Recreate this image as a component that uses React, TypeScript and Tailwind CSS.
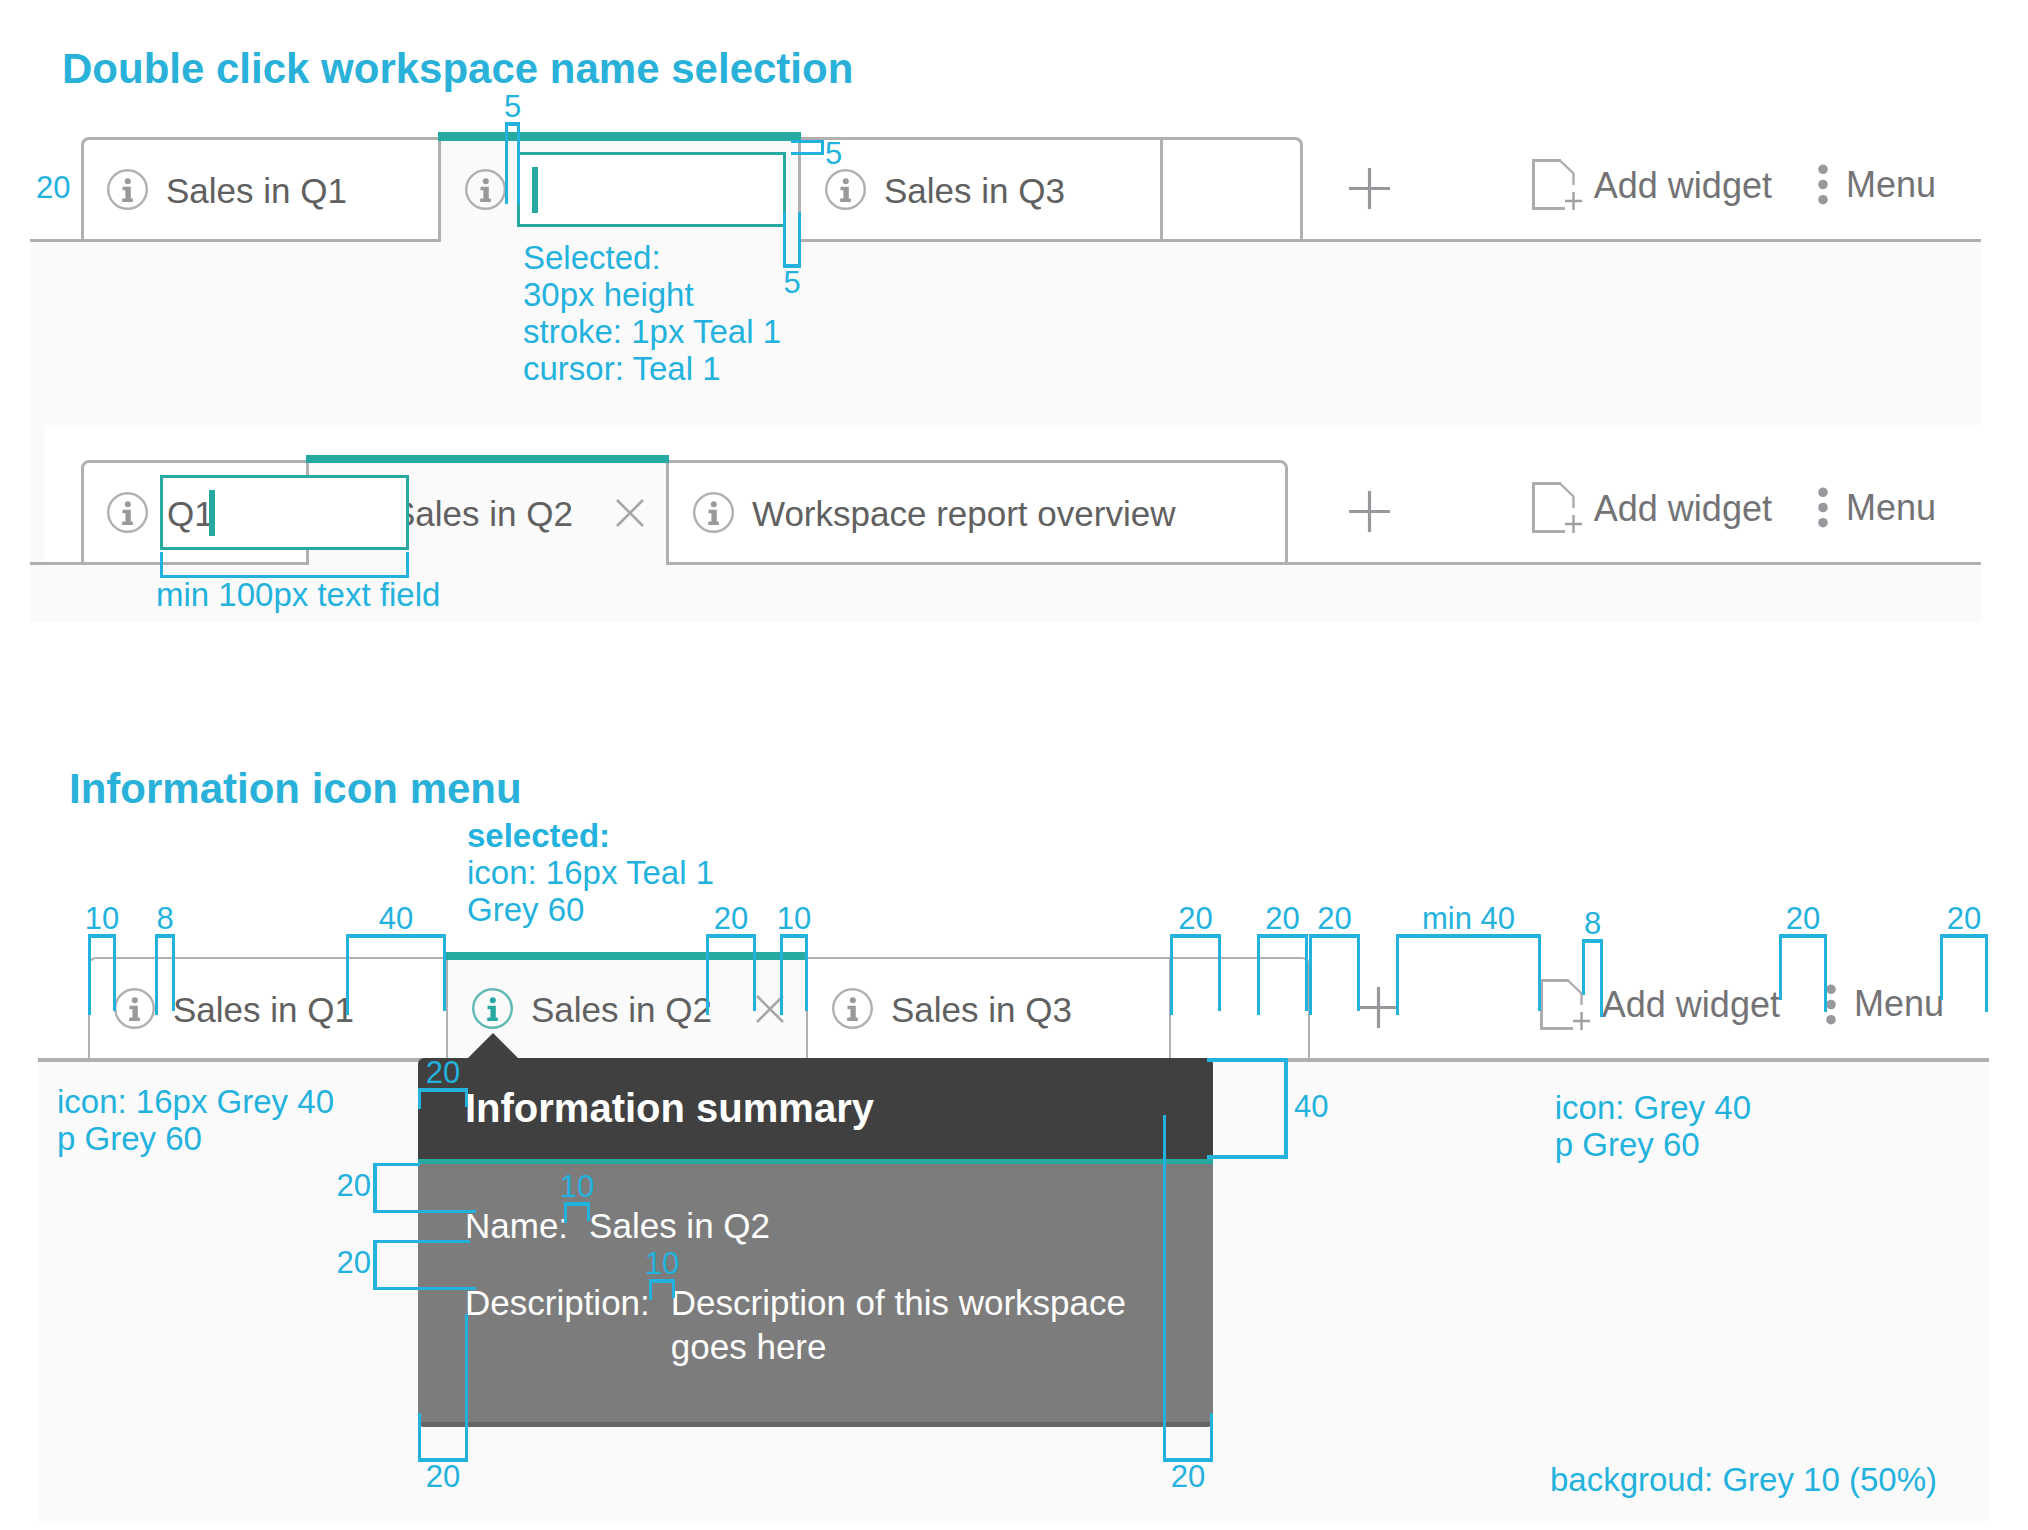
import type { ReactNode } from "react";

function InfoIcon({ active = false }: { active?: boolean }) {
  return (
    <svg
      viewBox="0 0 41 41"
      className={active ? "size-[41px] text-[#26a9a1]" : "size-[41px] text-[#999999]"}
      aria-hidden="true"
    >
      <circle
        cx="20.5"
        cy="20.5"
        r="19.3"
        fill="none"
        stroke={active ? "#5fb8b2" : "#b0b0b0"}
        strokeWidth="2.4"
      />
      <circle cx="20.8" cy="12.2" r="3" fill="currentColor" />
      <path d="M15.5 17.8H23.8V29.5H25.8V33H15.2V29.5H18.4V21.2H15.5Z" fill="currentColor" />
    </svg>
  );
}

function CloseIcon() {
  return (
    <svg viewBox="0 0 28 28" className="size-7" fill="none" stroke="#a6a6a8" strokeWidth="2.6" aria-hidden="true">
      <path d="M1 1L27 27M27 1L1 27" />
    </svg>
  );
}

function PlusIcon() {
  return (
    <svg viewBox="0 0 41 41" className="size-[41px]" fill="none" stroke="#98989c" strokeWidth="3.2" aria-hidden="true">
      <path d="M20.5 0V41M0 20.5H41" />
    </svg>
  );
}

function AddWidgetIcon() {
  return (
    <svg viewBox="0 0 50 51" className="h-[51px] w-[50px]" fill="none" stroke="#acacae" aria-hidden="true">
      <path d="M33 49.5H1.5V1.5H29" strokeWidth="3" />
      <path d="M28.5 2L41.5 14.5V26" strokeWidth="2.4" />
      <path d="M41.5 33V51M33 42H50" strokeWidth="2.4" stroke="#a0a0a3" />
    </svg>
  );
}

function MenuIcon() {
  return (
    <svg viewBox="0 0 10 41" className="h-[41px] w-2.5" fill="#97999c" aria-hidden="true">
      <circle cx="5" cy="5.3" r="4.8" />
      <circle cx="5" cy="20.5" r="4.8" />
      <circle cx="5" cy="35.7" r="4.8" />
    </svg>
  );
}

type TabProps = {
  className: string;
  label?: string;
  active?: boolean;
  infoActive?: boolean;
  closable?: boolean;
  hasInfo?: boolean;
  children?: ReactNode;
};

function Tab({ className, label, active, infoActive, closable, hasInfo = true, children }: TabProps) {
  return (
    <div
      role="tab"
      aria-selected={!!active}
      className={
        (active ? "bg-[#fafafa] " : "border-[#b0b0b0] bg-white ") +
        "relative flex shrink-0 items-center " +
        className
      }
    >
      {hasInfo && (
        <button type="button" aria-label="Information" className="shrink-0">
          <InfoIcon active={infoActive} />
        </button>
      )}
      {label && (
        <span className="ml-[18px] pt-0.5 text-[35px] leading-[44px] whitespace-nowrap text-[#606060]">{label}</span>
      )}
      {closable && (
        <button type="button" aria-label="Close" className="mr-[22px] ml-auto">
          <CloseIcon />
        </button>
      )}
      {children}
    </div>
  );
}

function Accent({ className }: { className: string }) {
  return <span className={"absolute z-10 bg-[#26a9a1] " + className} />;
}

function NameField({ className, value, caret }: { className: string; value: string; caret: string }) {
  return (
    <span className={"z-20 block h-[75px] " + className}>
      <input
        type="text"
        aria-label="Workspace name"
        defaultValue={value}
        className="h-full w-full border-[3px] border-[#26a9a1] bg-white pt-0.5 pl-1 text-[35px] text-[#606060] outline-none"
      />
      <span className={"absolute top-[15px] h-[46px] w-1.5 bg-[#26a9a1] " + caret} />
    </span>
  );
}

function Toolbar({ className }: { className: string }) {
  return (
    <div className={"flex flex-1 items-center border-[#b0b0b0] bg-white pr-[45px] text-[36px] text-[#737375] " + className}>
      <button type="button" aria-label="Add workspace">
        <PlusIcon />
      </button>
      <button type="button" className="ml-auto flex items-center gap-3 pb-[7px] leading-[44px] whitespace-nowrap">
        <AddWidgetIcon />
        <span className="pt-0.5">Add widget</span>
      </button>
      <button type="button" className="ml-[46px] flex items-center gap-[18px] pb-[7px] leading-[44px]">
        <MenuIcon />
        Menu
      </button>
    </div>
  );
}

type GapProps = { className: string; label: string; left?: string; right?: string };

/* Measuring bracket that opens downwards, with its value above. */
function GapAbove({ className, label, left = "h-[77px]", right = "h-[73px]" }: GapProps) {
  return (
    <div className={"absolute z-30 flex items-start justify-between border-t-4 border-[#22b2dd] " + className}>
      <span className={"w-[3px] bg-[#22b2dd] " + left} />
      <span className={"w-[3px] bg-[#22b2dd] " + right} />
      <span className="absolute bottom-full left-1/2 mb-1 -translate-x-1/2 text-[31px] leading-[30px] whitespace-nowrap text-[#22b2dd]">
        {label}
      </span>
    </div>
  );
}

/* Measuring bracket that opens upwards, with its value below. */
function GapBelow({ className, label, left, right }: GapProps) {
  return (
    <div className={"absolute z-30 flex items-end justify-between border-b-4 border-[#22b2dd] " + className}>
      <span className={"w-[3px] bg-[#22b2dd] " + left} />
      <span className={"w-[3px] bg-[#22b2dd] " + right} />
      <span className="absolute top-full left-1/2 mt-1 -translate-x-1/2 text-[31px] leading-[30px] text-[#22b2dd]">
        {label}
      </span>
    </div>
  );
}

/* Measuring bracket for a vertical distance, with its value on the left. */
function GapLeft({ className, label, topLine }: { className: string; label: string; topLine: string }) {
  return (
    <div className={"absolute z-30 h-[50px] w-[103px] border-b-[3px] border-l-4 border-[#22b2dd] " + className}>
      <span className={"block h-[3px] bg-[#22b2dd] " + topLine} />
      <span className="absolute top-2 right-full mr-1.5 text-[31px] leading-[30px] text-[#22b2dd]">{label}</span>
    </div>
  );
}

function Note({ className, children }: { className: string; children: ReactNode }) {
  return (
    <p className={"absolute z-30 text-[33px] leading-[37px] whitespace-nowrap text-[#22b2dd] " + className}>
      {children}
    </p>
  );
}

function NameSelection() {
  return (
    <section>
      <h2 className="pt-[45px] pl-[62px] text-[42px] leading-[48px] font-bold text-[#29b1d9]">
        Double click workspace name selection
      </h2>
      <div className="relative mt-11 mr-[47px] ml-[30px]">
        <div className="flex h-[105px]" role="tablist">
          <div className="w-[51px] shrink-0 border-b-[3px] border-[#b0b0b0]" />
          <Tab label="Sales in Q1" className="w-[360px] rounded-tl-lg border-[3px] pl-[23px]" />
          <Tab active className="w-[357px] pt-[3px] pb-[3px] pl-6">
            <Accent className="-top-[5px] -right-[3px] -left-[3px] h-[9px]" />
            <NameField className="relative mr-3 ml-[11px] flex-1" value="" caret="left-[15px]" />
          </Tab>
          <Tab label="Sales in Q3" className="w-[362px] border-y-[3px] border-l-[3px] pl-6" />
          <Tab hasInfo={false} className="w-[143px] rounded-tr-lg border-[3px]" />
          <Toolbar className="border-b-[3px] pl-[46px]" />
        </div>

        <div className="bg-[#fafafa] pt-[183px] pb-[57px]">
          <div className="ml-3.5 h-[35px] bg-white" />
          <div className="relative flex h-[105px]" role="tablist">
            <div className="w-3.5 shrink-0 border-b-[3px] border-[#b0b0b0]" />
            <div className="w-[37px] shrink-0 border-b-[3px] border-[#b0b0b0] bg-white" />
            <div className="flex shrink-0 bg-white">
              <Tab className="w-[228px] rounded-tl-lg border-[3px] pl-[23px]">
                <NameField className="absolute top-3 left-[76px] w-[249px]" value="Q1" caret="left-[49px]" />
                <div className="absolute top-[89px] left-[76px] z-30 h-[26px] w-[249px] border-x-[3px] border-b-[3px] border-[#22b2dd]">
                  <Note className="top-full -left-[7px] mt-px">min 100px text field</Note>
                </div>
              </Tab>
              <Tab label="Sales in Q2" active closable className="w-[357px] py-[3px] pl-6">
                <Accent className="-top-[5px] -right-[3px] -left-[3px] h-2" />
              </Tab>
              <Tab label="Workspace report overview" className="w-[622px] rounded-tr-lg border-[3px] pl-6" />
            </div>
            <Toolbar className="border-b-[3px] pl-[61px]" />
          </div>
        </div>

        <span className="absolute top-9 left-1.5 text-[31px] leading-[30px] text-[#22b2dd]">20</span>
        <GapAbove className="-top-[15px] left-[475px] w-[15px]" label="5" left="h-[78px]" right="h-[78px]" />
        <div className="absolute top-[3px] left-[761px] z-30 h-[15px] w-[33px] border-y-[3px] border-r-[3px] border-[#22b2dd]">
          <span className="absolute -top-1 left-full ml-1 text-[31px] leading-[30px] text-[#22b2dd]">5</span>
        </div>
        <GapBelow className="top-[75px] left-[753px] w-[18px]" label="5" left="h-[52px]" right="h-[52px]" />
        <Note className="top-[102px] left-[493px]">
          Selected:
          <br />
          30px height
          <br />
          stroke: 1px Teal 1
          <br />
          cursor: Teal 1
        </Note>
      </div>
    </section>
  );
}

function InfoPopover() {
  return (
    <div className="absolute top-[101px] left-[380px] z-20 w-[795px]">
      <svg viewBox="0 0 50 25" className="absolute bottom-full left-[50px] h-[25px] w-[50px]" aria-hidden="true">
        <path d="M25 0L50 25H0Z" fill="#404040" />
      </svg>
      <div role="dialog" aria-label="Information summary" className="overflow-hidden rounded-md text-white">
        <h3 className="border-b-[5px] border-[#26a9a1] bg-[#404040] px-[47px] py-[26px] text-[40px] leading-[49px] font-bold">
          Information summary
        </h3>
        <dl className="flex flex-col gap-[33px] border-b-[5px] border-[#666666] bg-[#7c7c7c] px-[47px] pt-10 pb-[53px] text-[35px] leading-[44px]">
          <div className="flex gap-[21px]">
            <dt>Name:</dt>
            <dd>Sales in Q2</dd>
          </div>
          <div className="flex gap-[21px]">
            <dt>Description:</dt>
            <dd>Description of this workspace goes here</dd>
          </div>
        </dl>
      </div>

      <GapAbove className="top-[30px] left-0 w-[50px]" label="20" left="h-[17px]" right="h-[15px]" />
      <div className="absolute top-0 left-[789px] z-30 h-[101px] w-[81px] border-y-4 border-r-4 border-[#22b2dd]">
        <span className="absolute top-[30px] left-full ml-2.5 text-[31px] leading-[30px] text-[#22b2dd]">40</span>
      </div>
      <GapLeft className="top-[105px] -left-[45px]" label="20" topLine="w-[43px]" />
      <GapLeft className="top-[182px] -left-[45px]" label="20" topLine="w-[93px]" />
      <GapAbove className="top-[144px] left-[146px] w-[26px]" label="10" left="h-[17px]" right="h-[15px]" />
      <GapAbove className="top-[221px] left-[231px] w-[26px]" label="10" left="h-[17px]" right="h-[15px]" />
      <GapBelow className="top-[256px] left-0 w-[50px]" label="20" left="h-[45px]" right="h-[144px]" />
      <GapBelow className="top-[57px] left-[745px] w-[50px]" label="20" left="h-[343px]" right="h-[45px]" />
    </div>
  );
}

function InformationMenu() {
  return (
    <section>
      <h2 className="pt-[143px] pl-[69px] text-[42px] leading-[48px] font-bold text-[#29b1d9]">
        Information icon menu
      </h2>
      <div className="relative mt-36 mr-[39px] ml-[38px]">
        <div className="flex h-[105px] border-b-4 border-[#b0b0b0]" role="tablist">
          <div className="w-[50px] shrink-0" />
          <Tab label="Sales in Q1" className="w-[360px] rounded-tl-lg border-x-2 border-t-2 pl-6" />
          <Tab label="Sales in Q2" active infoActive closable className="w-[358px] pt-0.5 pl-6">
            <Accent className="-top-[5px] right-0 -left-[2px] h-2" />
          </Tab>
          <Tab label="Sales in Q3" className="w-[363px] border-t-2 border-l-2 pl-6" />
          <Tab hasInfo={false} className="w-[141px] rounded-tr-lg border-x-2 border-t-2" />
          <Toolbar className="pl-12" />
        </div>
        <div className="h-[459px] bg-[#fafafa]" />

        <Note className="-top-[140px] left-[429px]">
          <strong>selected:</strong>
          <br />
          icon: 16px Teal 1
          <br />
          Grey 60
        </Note>
        <GapAbove className="-top-[23px] left-[50px] w-7" label="10" />
        <GapAbove className="-top-[23px] left-[117px] w-5" label="8" />
        <GapAbove className="-top-[23px] left-[308px] w-[100px]" label="40" />
        <GapAbove className="-top-[23px] left-[668px] w-[50px]" label="20" />
        <GapAbove className="-top-[23px] left-[742px] w-[28px]" label="10" />
        <GapAbove className="-top-[23px] left-[1132px] w-[51px]" label="20" />
        <GapAbove className="-top-[23px] left-[1219px] w-[51px]" label="20" />
        <GapAbove className="-top-[23px] left-[1271px] w-[51px]" label="20" />
        <GapAbove className="-top-[23px] right-[448px] left-[1358px]" label="min 40" />
        <GapAbove className="-top-[18px] right-[386px] w-[21px]" label="8" left="h-[52px]" right="h-[74px]" />
        <GapAbove className="-top-[23px] right-[162px] w-12" label="20" left="h-[62px]" right="h-[74px]" />
        <GapAbove className="-top-[23px] right-px w-12" label="20" left="h-[62px]" right="h-[74px]" />

        <InfoPopover />

        <Note className="top-[126px] left-[19px]">
          icon: 16px Grey 40
          <br />p Grey 60
        </Note>
        <Note className="top-[132px] right-[238px]">
          icon: Grey 40
          <br />p Grey 60
        </Note>
        <Note className="right-[52px] bottom-[23px]">backgroud: Grey 10 (50%)</Note>
      </div>
    </section>
  );
}

export default function App() {
  return (
    <main className="min-h-screen overflow-x-hidden bg-white font-['Liberation_Sans',Arial,sans-serif]">
      <NameSelection />
      <InformationMenu />
    </main>
  );
}
